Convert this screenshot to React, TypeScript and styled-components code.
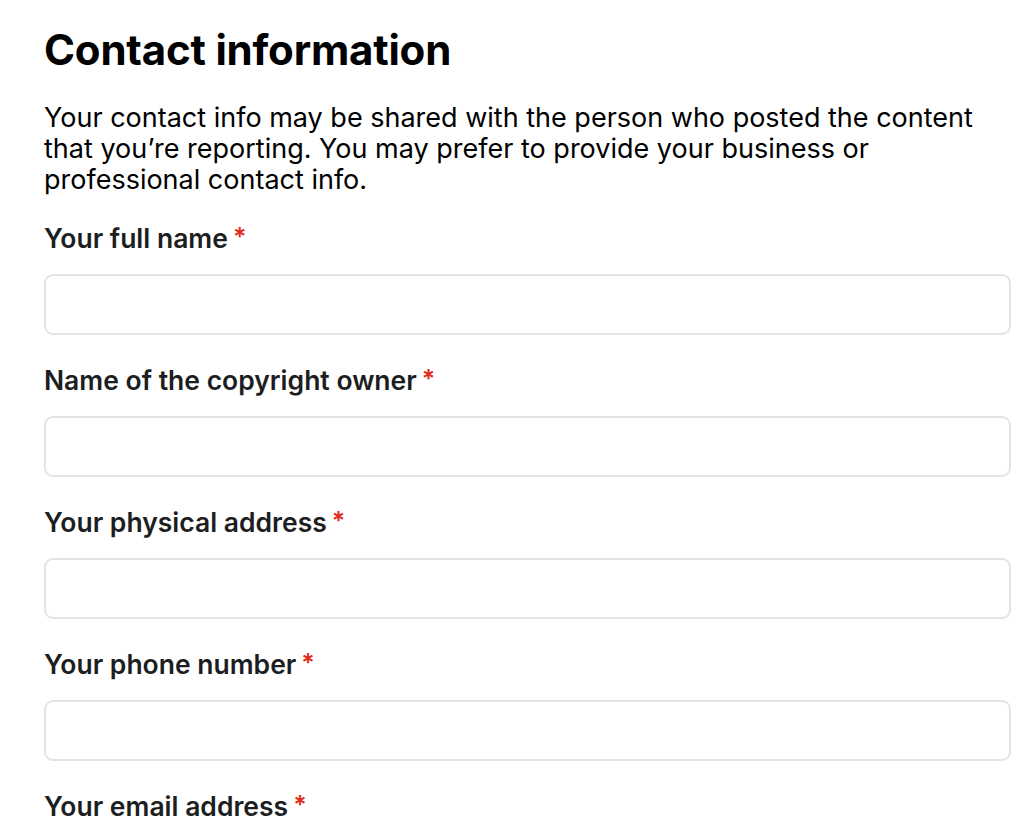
import React from "react";
import styled, { createGlobalStyle } from "styled-components";

const GlobalStyle = createGlobalStyle`
    html, body {
        margin: 0;
        padding: 0;
        background: #fff;
    }
    body {
        font-family: Inter, "Noto Sans", sans-serif;
        color: #000;
        -webkit-font-smoothing: antialiased;
    }
`;

type Field = {
    id: string;
    label: string;
};

const fields: Field[] = [
    { id: "fullName", label: "Your full name" },
    { id: "owner", label: "Name of the copyright owner" },
    { id: "address", label: "Your physical address" },
    { id: "phone", label: "Your phone number" },
    { id: "email", label: "Your email address" },
];

const App: React.FC = () => {
    return (
        <>
            <GlobalStyle />
            <Page>
                <Title>Contact information</Title>
                <Intro>
                    Your contact info may be shared with the person who posted the content
                    that you’re reporting. You may prefer to provide your business or
                    professional contact info.
                </Intro>
                <Form>
                    {fields.map((f) => (
                        <FieldGroup key={f.id}>
                            <Label htmlFor={f.id}>
                                {f.label}
                                <Required>*</Required>
                            </Label>
                            <Input id={f.id} type="text" />
                        </FieldGroup>
                    ))}
                </Form>
            </Page>
        </>
    );
};

const Page = styled.main`
    padding: 25px 13px 0 44px;
    display: flex;
    flex-flow: column nowrap;
`;

const Title = styled.h1`
    margin: 0;
    font-size: 42px;
    line-height: 50px;
    font-weight: 700;
    letter-spacing: -0.2px;
`;

const Intro = styled.p`
    margin: 27px 0 0;
    font-size: 27px;
    line-height: 31px;
    font-weight: 400;
    color: #000;
`;

const Form = styled.div`
    margin-top: 28px;
    display: flex;
    flex-flow: column nowrap;
    gap: 30px;
`;

const FieldGroup = styled.div`
    display: flex;
    flex-flow: column nowrap;
    gap: 20px;
`;

const Label = styled.label`
    font-size: 26.5px;
    line-height: 30px;
    font-weight: 600;
    color: #1c1e21;
`;

const Required = styled.span`
    color: #e02b20;
    margin-left: 5px;
    font-size: 25px;
    position: relative;
    top: -2px;
`;

const Input = styled.input`
    box-sizing: border-box;
    width: 100%;
    height: 61px;
    border: 2px solid #e4e4e4;
    border-radius: 9px;
    background: #fff;
    outline: none;
    padding: 0 16px;
    font: inherit;
    font-size: 24px;
`;

export default App;
